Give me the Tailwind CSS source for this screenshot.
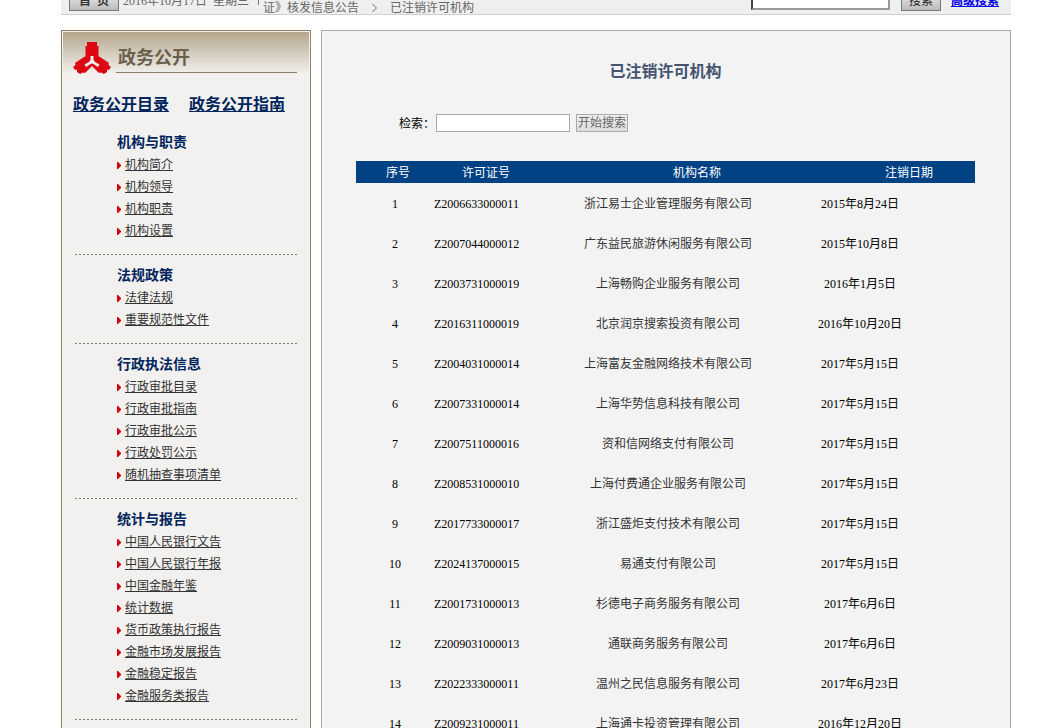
<!DOCTYPE html>
<html lang="zh-CN">
<head>
<meta charset="utf-8">
<title>已注销许可机构</title>
<script src="https://cdn.jsdelivr.net/npm/@tailwindcss/browser@4"></script>
</head>
<body class="overflow-hidden bg-white pl-[11px] font-['Liberation_Serif','Noto_Sans_CJK_SC',sans-serif] text-xs text-black">
<svg class="hidden"><symbol id="tri" viewBox="0 0 4 7"><path d="M0 0H1L4 3V4L1 7H0Z" fill="#d3000f"/></symbol></svg>
<div class="mx-auto w-full max-w-[950px]">

  <header class="flex h-[15px] items-end overflow-hidden border-b border-[#cfcfcf] bg-[#efefef] text-[#666]">
    <button class="mb-[3px] ml-2 h-5 w-[50px] shrink-0 border border-[#777] bg-linear-to-b from-[#eee] to-[#bbb] text-xs leading-4 font-bold text-[#333]">首&nbsp; 页</button>
    <span class="mb-1 ml-1 shrink-0 leading-[18px] whitespace-pre">2016年10月17日  星期三</span>
    <span class="mb-[9px] ml-[9px] h-3 w-px shrink-0 bg-[#777]"></span>
    <nav class="-mb-[3px] ml-1 flex shrink-0 items-center leading-[18px]">
      <span>证》核发信息公告</span>
      <svg class="mx-[13px] h-2 w-[5px]" viewBox="0 0 5 8" fill="none" stroke="#666"><path d="M.5 0L4.500 4L.5 8"/></svg>
      <span>已注销许可机构</span>
    </nav>
    <input aria-label="站内搜索" class="mb-1 ml-auto h-6 w-[139px] shrink-0 border-2 border-[#999] border-t-[#444] border-l-[#444] bg-white">
    <button class="mb-[3px] ml-[11px] h-5 w-10 shrink-0 border border-[#777] bg-linear-to-b from-[#eee] to-[#bbb] text-xs leading-4 text-[#222]">搜索</button>
    <a href="#" class="mr-3 mb-1 ml-[10px] shrink-0 leading-[18px] font-bold text-[#00e] underline">高级搜索</a>
  </header>

  <div class="mt-[15px] flex items-stretch gap-[10px]">
    <aside class="w-[250px] shrink-0 border border-[#8d7f63] bg-[#f2f1ef] p-px">
      <div class="flex h-[42px] bg-linear-to-b from-[#b5a68d] to-[#f2f1ef] pt-[10px] pl-[10px]">
        <svg class="h-8 w-[38px] shrink-0" viewBox="0 0 38 32">
          <path fill="#dd0714" d="M14 0H24V4H25.500V14L30 17L36 21L35.500 23L38 25L36 28L34 27.500L34 30L31 32L28 30.500L26 31L19 24L12 31L10 30.500L7 32L4 30V27.500L2 28L0 25L2.500 23L2 21L8 17L12.500 14V4H14Z"/>
          <path fill="#f2f1ef" d="M17.500 14H20.500V18L22 20L26.500 22.500L25 25L20.500 22L19 21.500L17.500 22L13 25L11.500 22.500L16 20L17.500 18Z"/>
        </svg>
        <h2 class="mr-3 ml-[5px] h-[31px] grow border-b border-[#8d7f63] pl-[2px] text-lg leading-8 font-bold text-[#6b604b]">政务公开</h2>
      </div>
      <div class="flex gap-5 pt-[19px] pl-[10px] text-base leading-6 font-bold text-[#00245c]">
        <a href="#" class="underline">政务公开目录</a>
        <a href="#" class="underline">政务公开指南</a>
      </div>

      <section class="pt-[15px] text-[#333]">
        <h3 class="pl-[54px] text-sm leading-[22px] font-bold text-[#00245c]">机构与职责</h3>
        <ul class="pl-[54px] leading-[22px]">
          <li class="flex items-center gap-1"><svg class="h-[7px] w-1"><use href="#tri"/></svg><a href="#" class="underline">机构简介</a></li>
          <li class="flex items-center gap-1"><svg class="h-[7px] w-1"><use href="#tri"/></svg><a href="#" class="underline">机构领导</a></li>
          <li class="flex items-center gap-1"><svg class="h-[7px] w-1"><use href="#tri"/></svg><a href="#" class="underline">机构职责</a></li>
          <li class="flex items-center gap-1"><svg class="h-[7px] w-1"><use href="#tri"/></svg><a href="#" class="underline">机构设置</a></li>
        </ul>
        <div class="mx-3 mt-3 h-px bg-[repeating-linear-gradient(90deg,#857f68_0_2px,transparent_2px_4px)]"></div>
      </section>

      <section class="pt-[10px] text-[#333]">
        <h3 class="pl-[54px] text-sm leading-[22px] font-bold text-[#00245c]">法规政策</h3>
        <ul class="pl-[54px] leading-[22px]">
          <li class="flex items-center gap-1"><svg class="h-[7px] w-1"><use href="#tri"/></svg><a href="#" class="underline">法律法规</a></li>
          <li class="flex items-center gap-1"><svg class="h-[7px] w-1"><use href="#tri"/></svg><a href="#" class="underline">重要规范性文件</a></li>
        </ul>
        <div class="mx-3 mt-3 h-px bg-[repeating-linear-gradient(90deg,#857f68_0_2px,transparent_2px_4px)]"></div>
      </section>

      <section class="pt-[10px] text-[#333]">
        <h3 class="pl-[54px] text-sm leading-[22px] font-bold text-[#00245c]">行政执法信息</h3>
        <ul class="pl-[54px] leading-[22px]">
          <li class="flex items-center gap-1"><svg class="h-[7px] w-1"><use href="#tri"/></svg><a href="#" class="underline">行政审批目录</a></li>
          <li class="flex items-center gap-1"><svg class="h-[7px] w-1"><use href="#tri"/></svg><a href="#" class="underline">行政审批指南</a></li>
          <li class="flex items-center gap-1"><svg class="h-[7px] w-1"><use href="#tri"/></svg><a href="#" class="underline">行政审批公示</a></li>
          <li class="flex items-center gap-1"><svg class="h-[7px] w-1"><use href="#tri"/></svg><a href="#" class="underline">行政处罚公示</a></li>
          <li class="flex items-center gap-1"><svg class="h-[7px] w-1"><use href="#tri"/></svg><a href="#" class="underline">随机抽查事项清单</a></li>
        </ul>
        <div class="mx-3 mt-3 h-px bg-[repeating-linear-gradient(90deg,#857f68_0_2px,transparent_2px_4px)]"></div>
      </section>

      <section class="pt-[10px] pb-5 text-[#333]">
        <h3 class="pl-[54px] text-sm leading-[22px] font-bold text-[#00245c]">统计与报告</h3>
        <ul class="pl-[54px] leading-[22px]">
          <li class="flex items-center gap-1"><svg class="h-[7px] w-1"><use href="#tri"/></svg><a href="#" class="underline">中国人民银行文告</a></li>
          <li class="flex items-center gap-1"><svg class="h-[7px] w-1"><use href="#tri"/></svg><a href="#" class="underline">中国人民银行年报</a></li>
          <li class="flex items-center gap-1"><svg class="h-[7px] w-1"><use href="#tri"/></svg><a href="#" class="underline">中国金融年鉴</a></li>
          <li class="flex items-center gap-1"><svg class="h-[7px] w-1"><use href="#tri"/></svg><a href="#" class="underline">统计数据</a></li>
          <li class="flex items-center gap-1"><svg class="h-[7px] w-1"><use href="#tri"/></svg><a href="#" class="underline">货币政策执行报告</a></li>
          <li class="flex items-center gap-1"><svg class="h-[7px] w-1"><use href="#tri"/></svg><a href="#" class="underline">金融市场发展报告</a></li>
          <li class="flex items-center gap-1"><svg class="h-[7px] w-1"><use href="#tri"/></svg><a href="#" class="underline">金融稳定报告</a></li>
          <li class="flex items-center gap-1"><svg class="h-[7px] w-1"><use href="#tri"/></svg><a href="#" class="underline">金融服务类报告</a></li>
        </ul>
        <div class="mx-3 mt-3 h-px bg-[repeating-linear-gradient(90deg,#857f68_0_2px,transparent_2px_4px)]"></div>
      </section>
    </aside>

    <main class="min-w-0 grow border border-[#aaa] bg-[#f3f3f3] pr-[35px] pl-[34px]">
      <h1 class="pt-[29px] text-center text-base leading-6 font-bold text-[#44546f]">已注销许可机构</h1>
      <form class="mt-[30px] flex h-[18px] items-center pl-[43px]">
        <label for="q" class="w-[37px] pt-px leading-[18px]">检索：</label>
        <input id="q" class="h-[18px] w-[134px] border border-[#aaa] bg-white px-1">
        <button type="button" class="ml-[6px] h-[18px] border border-[#aaa] bg-linear-to-b from-[#eee] to-[#ddd] px-px text-xs leading-4 text-[#666]">开始搜索</button>
      </form>
      <table class="mt-[29px] w-full table-fixed text-center [&_td]:pt-[2px] [&_th]:pt-[2px]">
        <colgroup><col class="w-[78px]"><col class="w-[82px]"><col><col class="w-[159px]"></colgroup>
        <thead>
          <tr class="h-[22px] bg-[#004284] text-white">
            <th class="pl-[6px] font-normal">序号</th><th class="pl-[22px] font-normal">许可证号</th><th class="pl-[62px] font-normal">机构名称</th><th class="pl-[27px] font-normal">注销日期</th>
          </tr>
        </thead>
        <tbody>
          <tr class="h-10"><td>1</td><td>Z2006633000011</td><td class="pl-1 text-[#333]">浙江易士企业管理服务有限公司</td><td class="pr-[71px]">2015年8月24日</td></tr>
          <tr class="h-10"><td>2</td><td>Z2007044000012</td><td class="pl-1 text-[#333]">广东益民旅游休闲服务有限公司</td><td class="pr-[71px]">2015年10月8日</td></tr>
          <tr class="h-10"><td>3</td><td>Z2003731000019</td><td class="pl-1 text-[#333]">上海畅购企业服务有限公司</td><td class="pr-[71px]">2016年1月5日</td></tr>
          <tr class="h-10"><td>4</td><td>Z2016311000019</td><td class="pl-1 text-[#333]">北京润京搜索投资有限公司</td><td class="pr-[71px]">2016年10月20日</td></tr>
          <tr class="h-10"><td>5</td><td>Z2004031000014</td><td class="pl-1 text-[#333]">上海富友金融网络技术有限公司</td><td class="pr-[71px]">2017年5月15日</td></tr>
          <tr class="h-10"><td>6</td><td>Z2007331000014</td><td class="pl-1 text-[#333]">上海华势信息科技有限公司</td><td class="pr-[71px]">2017年5月15日</td></tr>
          <tr class="h-10"><td>7</td><td>Z2007511000016</td><td class="pl-1 text-[#333]">资和信网络支付有限公司</td><td class="pr-[71px]">2017年5月15日</td></tr>
          <tr class="h-10"><td>8</td><td>Z2008531000010</td><td class="pl-1 text-[#333]">上海付费通企业服务有限公司</td><td class="pr-[71px]">2017年5月15日</td></tr>
          <tr class="h-10"><td>9</td><td>Z2017733000017</td><td class="pl-1 text-[#333]">浙江盛炬支付技术有限公司</td><td class="pr-[71px]">2017年5月15日</td></tr>
          <tr class="h-10"><td>10</td><td>Z2024137000015</td><td class="pl-1 text-[#333]">易通支付有限公司</td><td class="pr-[71px]">2017年5月15日</td></tr>
          <tr class="h-10"><td>11</td><td>Z2001731000013</td><td class="pl-1 text-[#333]">杉德电子商务服务有限公司</td><td class="pr-[71px]">2017年6月6日</td></tr>
          <tr class="h-10"><td>12</td><td>Z2009031000013</td><td class="pl-1 text-[#333]">通联商务服务有限公司</td><td class="pr-[71px]">2017年6月6日</td></tr>
          <tr class="h-10"><td>13</td><td>Z2022333000011</td><td class="pl-1 text-[#333]">温州之民信息服务有限公司</td><td class="pr-[71px]">2017年6月23日</td></tr>
          <tr class="h-10"><td>14</td><td>Z2009231000011</td><td class="pl-1 text-[#333]">上海通卡投资管理有限公司</td><td class="pr-[71px]">2016年12月20日</td></tr>
        </tbody>
      </table>
    </main>
  </div>
</div>
</body>
</html>
